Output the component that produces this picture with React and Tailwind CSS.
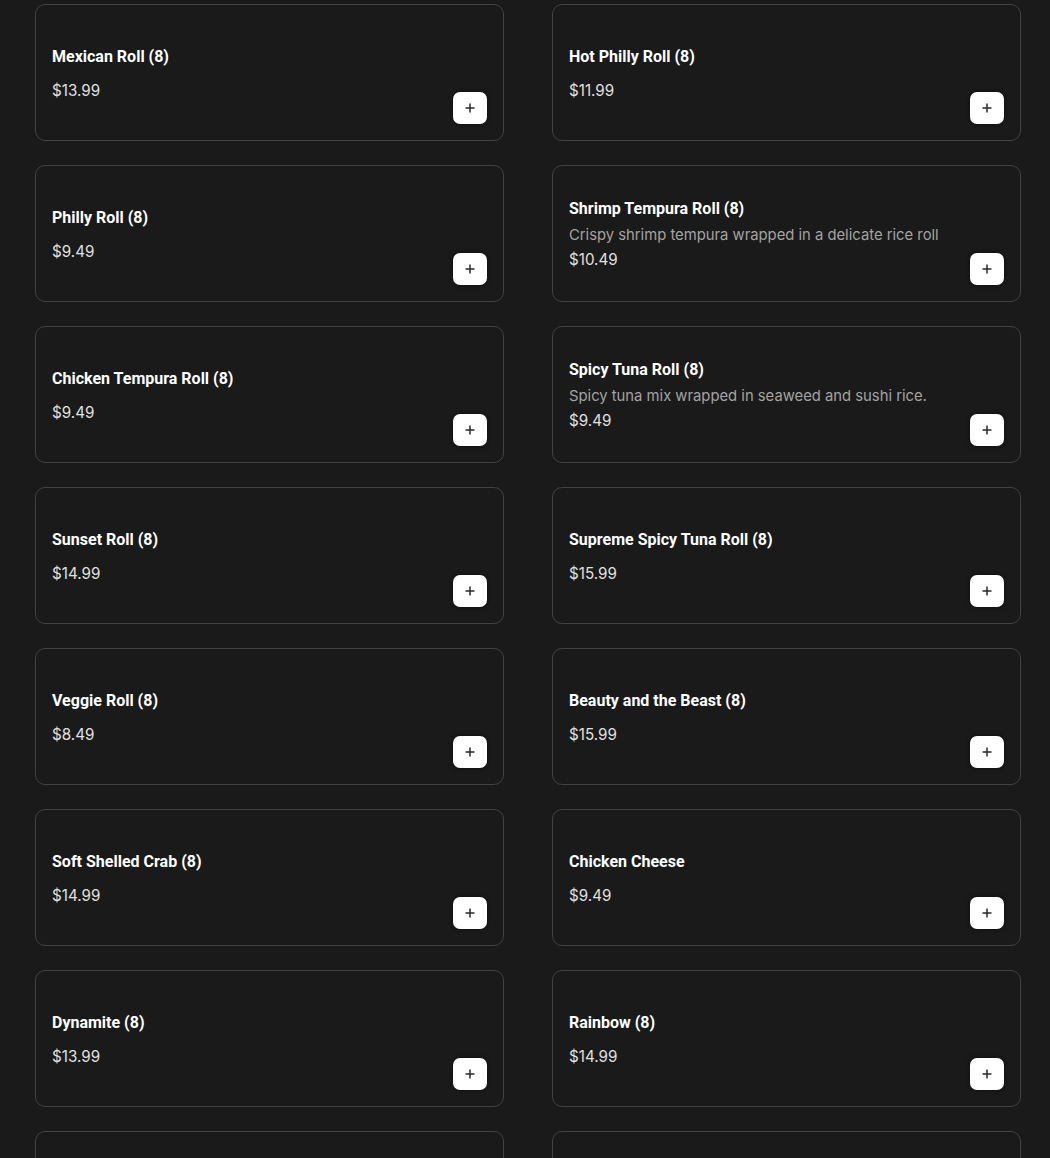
import React from 'react'

const items = [
  { name: 'Mexican Roll (8)', price: '$13.99' },
  { name: 'Hot Philly Roll (8)', price: '$11.99' },
  { name: 'Philly Roll (8)', price: '$9.49' },
  { name: 'Shrimp Tempura Roll (8)', price: '$10.49', desc: 'Crispy shrimp tempura wrapped in a delicate rice roll' },
  { name: 'Chicken Tempura Roll (8)', price: '$9.49' },
  { name: 'Spicy Tuna Roll (8)', price: '$9.49', desc: 'Spicy tuna mix wrapped in seaweed and sushi rice.' },
  { name: 'Sunset Roll (8)', price: '$14.99' },
  { name: 'Supreme Spicy Tuna Roll (8)', price: '$15.99' },
  { name: 'Veggie Roll (8)', price: '$8.49' },
  { name: 'Beauty and the Beast (8)', price: '$15.99' },
  { name: 'Soft Shelled Crab (8)', price: '$14.99' },
  { name: 'Chicken Cheese', price: '$9.49' },
  { name: 'Dynamite (8)', price: '$13.99' },
  { name: 'Rainbow (8)', price: '$14.99' },
]

const PlusIcon = () => (
  <svg width="10" height="10" viewBox="0 0 10 10" fill="none">
    <path d="M5 0.5v9M0.5 5h9" stroke="#2a2a2a" strokeWidth="1.5" />
  </svg>
)

const MenuCard = ({ item }) => (
  <div className="h-[137px] rounded-[10px] border border-[#424242] bg-[#1a1a1a] p-4 flex">
    <div className={`flex-1 flex flex-col justify-center ${item.desc ? 'pt-[1px]' : 'pt-[3px]'}`}>
      <h3 className="text-white font-bold text-[16px] leading-6 font-['Roboto',sans-serif]">{item.name}</h3>
      {item.desc && (
        <p className="mt-[4px] text-[#a3a3a3] text-[14.8px] leading-5 font-['Inter',sans-serif]">{item.desc}</p>
      )}
      <p
        className={`${item.desc ? 'mt-[3px]' : 'mt-[10px]'} text-[#e0e0e0] text-[15.2px] leading-6 font-['Inter',sans-serif]`}
      >
        {item.price}
      </p>
    </div>
    <div className="flex items-end">
      <button className="w-[34px] h-[32px] rounded-[7px] bg-white flex items-center justify-center shadow-[0_0_4px_rgba(0,0,0,0.6)]">
        <PlusIcon />
      </button>
    </div>
  </div>
)

const App = () => {
  return (
    <div className="h-[1158px] overflow-hidden bg-[#1a1a1a] pt-[4px]">
      <div className="ml-[35px] grid grid-cols-[469px_469px] gap-x-[48px] gap-y-[24px]">
        {items.map((item) => (
          <MenuCard key={item.name} item={item} />
        ))}
        <div className="h-[137px] rounded-[10px] border border-[#424242] bg-[#1a1a1a]" />
        <div className="h-[137px] rounded-[10px] border border-[#424242] bg-[#1a1a1a]" />
      </div>
    </div>
  )
}

export default App
